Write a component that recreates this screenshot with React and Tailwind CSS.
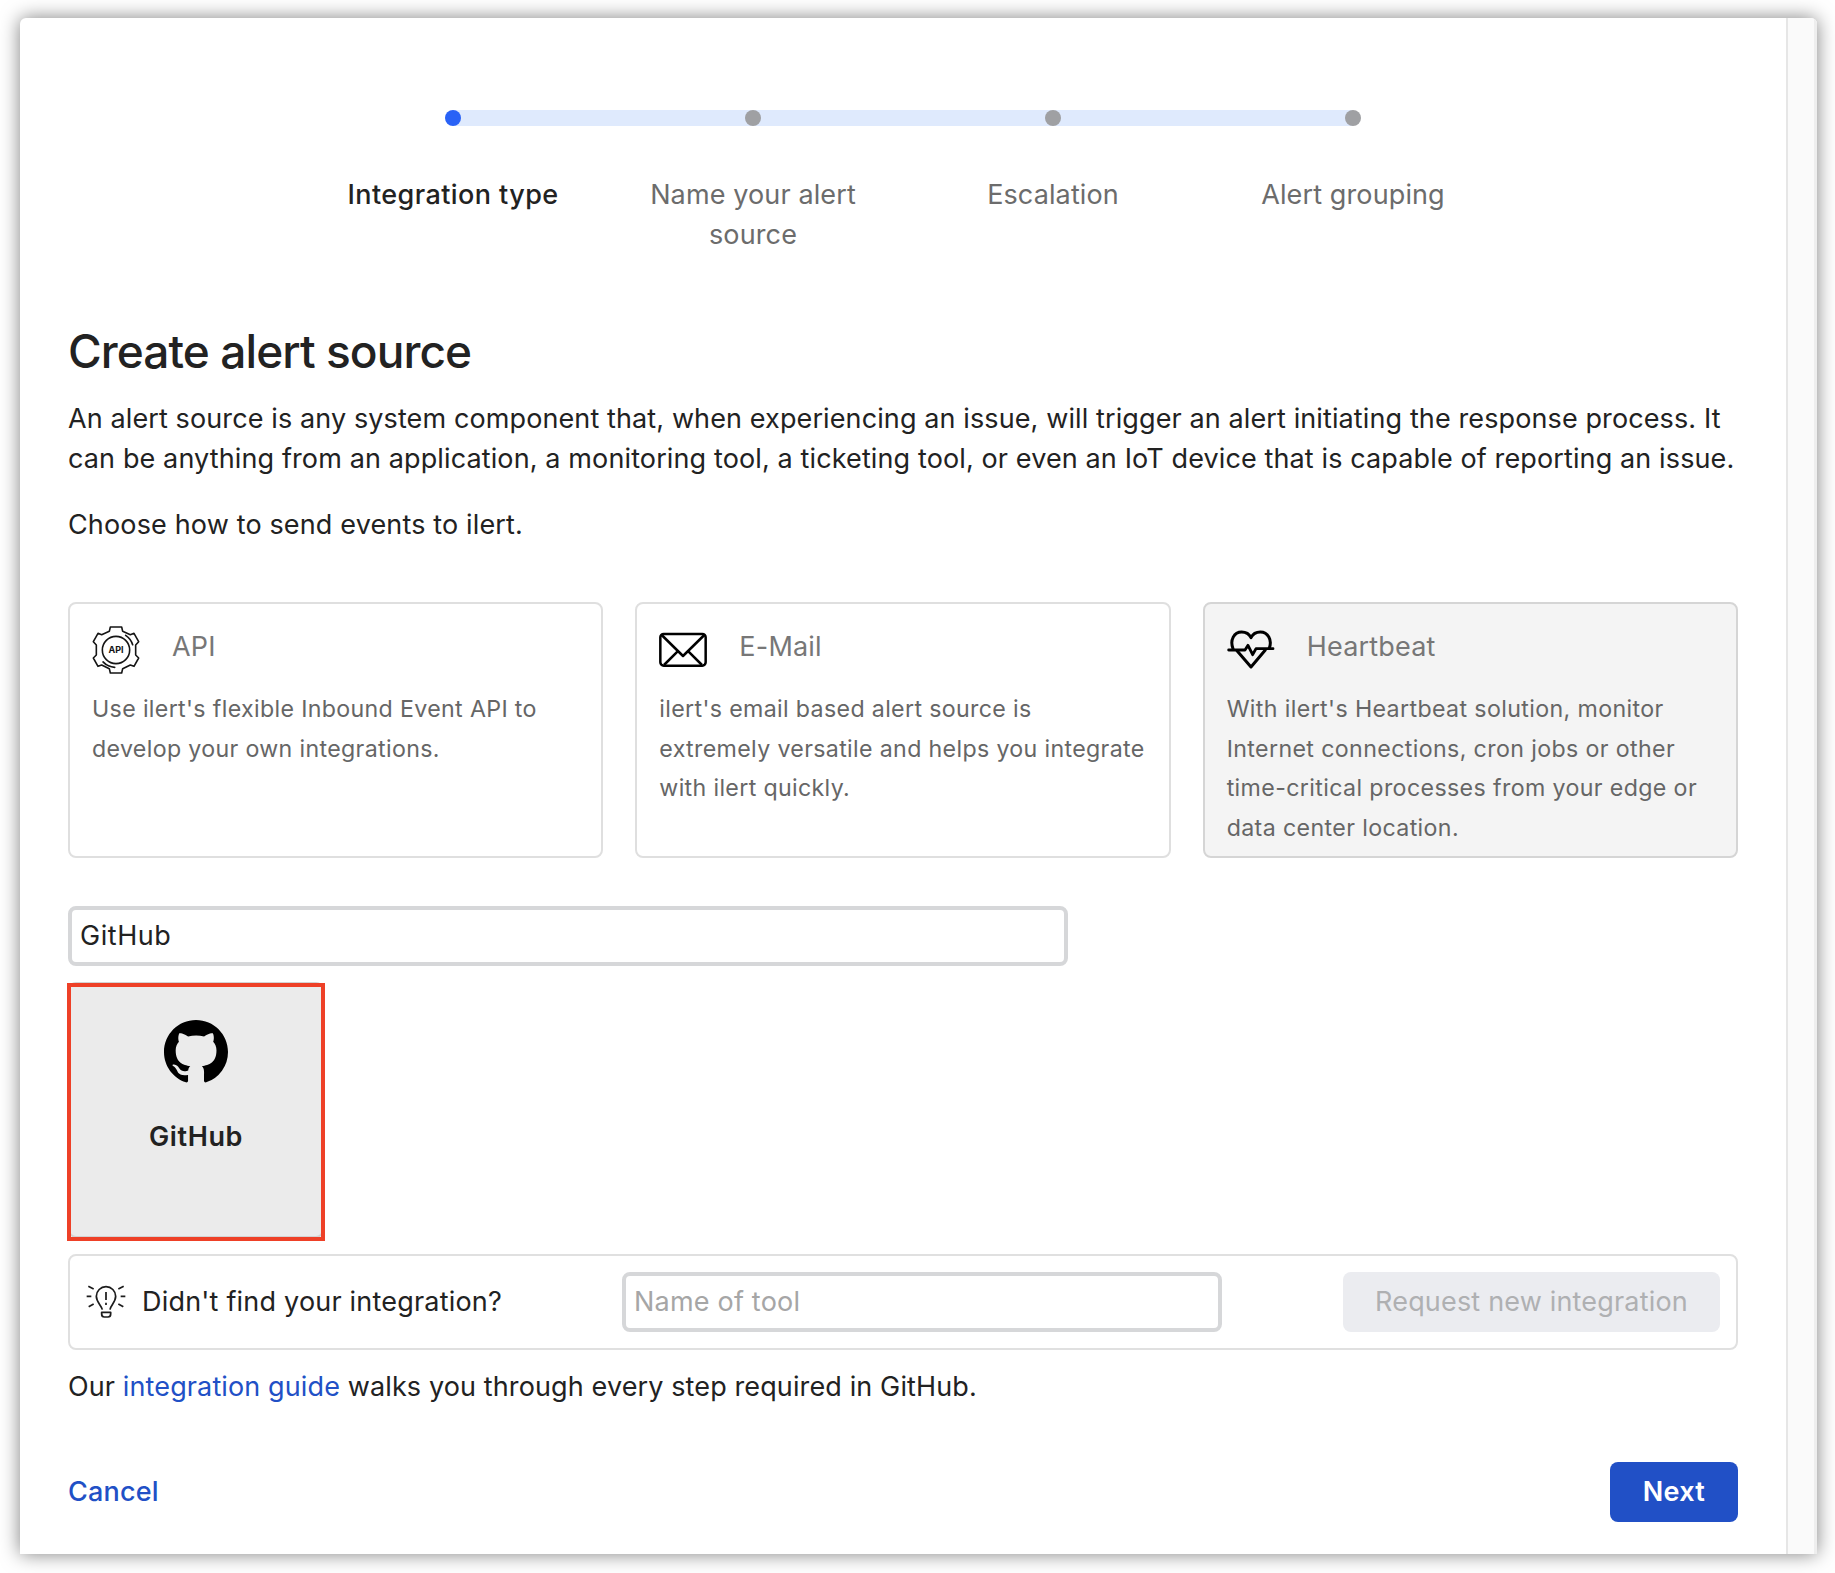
import React from "react";

const steps = [
  { label: "Integration type", active: true },
  { label: "Name your alert source" },
  { label: "Escalation" },
  { label: "Alert grouping" },
];

function ApiIcon() {
  return (
    <svg viewBox="0 0 144 144" className="size-12" fill="none" stroke="#151515" strokeWidth="4.8" strokeLinecap="round" strokeLinejoin="round">
      <path d="M55 3H89L92 16L115 26L126 22L140 47L131 57V87L140 96L126 121L115 117L92 128L89 141H55L52 128L29 117L18 121L4 96L13 87V57L4 47L18 22L29 26L52 16Z" />
      <circle cx="72" cy="72" r="41" />
      <path d="M101 28A53 53 0 0 1 122 56M43 116A53 53 0 0 1 33 108M68 124A53 53 0 0 1 34 108" strokeWidth="5" />
      <text x="72" y="81.5" textAnchor="middle" fontFamily="Inter, sans-serif" fontWeight="700" fontSize="27" fill="#151515" stroke="none">API</text>
    </svg>
  );
}

function MailIcon() {
  return (
    <svg viewBox="0 0 144 144" className="size-12" fill="none" stroke="#000" strokeWidth="7.5" strokeLinejoin="round">
      <rect x="4" y="24" width="136" height="95" rx="10" />
      <path d="M8 27L72 90L136 27M15 117L56 76M129 117L88 76" />
    </svg>
  );
}

function HeartbeatIcon() {
  return (
    <svg viewBox="0 0 144 144" className="size-12" fill="none" stroke="#000" strokeWidth="9" strokeLinecap="round" strokeLinejoin="round">
      <path d="M18 68C8 42 21 18 44 18C57 18 67 25 72 35C77 25 87 18 100 18C123 18 136 42 127 66" />
      <path d="M30 74L72 123L115 72" />
      <path d="M5 72H54L63 58L77 86L87 68H138" strokeWidth="8.5" />
    </svg>
  );
}

function BulbIcon() {
  return (
    <svg viewBox="0 0 120 120" className="size-10 shrink-0" fill="none" stroke="#1c1c1c" strokeWidth="5.2" strokeLinejoin="round">
      <path d="M49 83C46 69 31 61 31 43A29 29 0 0 1 89 43C89 61 74 69 72 83" />
      <path d="M60 30V54M60 62V69" />
      <path d="M47 91H74V96Q74 105 66 105H55Q47 105 47 96Z" />
      <path d="M2 43H16M104 43H118M7 13L23 21M113 13L97 21M8 74L23 66M112 74L97 66" />
    </svg>
  );
}

function GitHubMark() {
  return (
    <svg viewBox="0 0 16 16" className="size-16" fill="#000">
      <path d="M8 0C3.58 0 0 3.58 0 8c0 3.54 2.29 6.53 5.47 7.59.4.07.55-.17.55-.38 0-.19-.01-.82-.01-1.49-2.01.37-2.53-.49-2.69-.94-.09-.23-.48-.94-.82-1.13-.28-.15-.68-.52-.01-.53.63-.01 1.08.58 1.23.82.72 1.21 1.87.87 2.33.66.07-.52.28-.87.51-1.07-1.78-.2-3.64-.89-3.64-3.95 0-.87.31-1.59.82-2.15-.08-.2-.36-1.02.08-2.12 0 0 .67-.21 2.2.82.64-.18 1.32-.27 2-.27s1.36.09 2 .27c1.53-1.04 2.2-.82 2.2-.82.44 1.1.16 1.92.08 2.12.51.56.82 1.27.82 2.15 0 3.07-1.87 3.75-3.65 3.95.29.25.54.73.54 1.48 0 1.07-.01 1.93-.01 2.2 0 .21.15.46.55.38A8.01 8.01 0 0 0 16 8c0-4.42-3.58-8-8-8Z" />
    </svg>
  );
}

const options = [
  { title: "API", Icon: ApiIcon, lines: ["Use ilert's flexible Inbound Event API to", "develop your own integrations."] },
  { title: "E-Mail", Icon: MailIcon, lines: ["ilert's email based alert source is", "extremely versatile and helps you integrate", "with ilert quickly."] },
  {
    title: "Heartbeat",
    Icon: HeartbeatIcon,
    highlighted: true,
    lines: ["With ilert's Heartbeat solution, monitor", "Internet connections, cron jobs or other", "time-critical processes from your edge or", "data center location."],
  },
];

function Stepper() {
  return (
    <div className="mx-auto w-[1200px]">
      <div className="mx-[150px] h-4 bg-[#dfeafd]">
        <div className="-mx-2 flex justify-between">
          {steps.map((s) => (
            <span key={s.label} className={s.active ? "size-4 rounded-full bg-[#2962f6]" : "size-4 rounded-full bg-[#9fa0a3]"} />
          ))}
        </div>
      </div>
      <div className="mt-[49px] grid grid-cols-4 text-center leading-10">
        {steps.map((s) => (
          <div key={s.label} className={s.active ? "px-9 font-medium tracking-[0.42px]" : "px-9 tracking-[0.12px] text-[#6c6c6c]"}>
            {s.label}
          </div>
        ))}
      </div>
    </div>
  );
}

export default function App() {
  return (
    <div className="h-[1573px] w-[1835px] overflow-hidden bg-white pt-[18px] pl-[20px] font-['Inter',sans-serif] text-[27px] text-[#222]">
      <div className="flex h-[1536px] w-[1797px] overflow-hidden rounded-t-[6px] bg-white shadow-[0_0_19px_rgba(0,0,0,0.5)]">
        <main className="w-[1766px] pr-12 pl-12">
          <div className="-mr-[1px] -ml-[1px] pt-[92px]">
            <Stepper />
          </div>
          <h1 className="mt-[68px] text-[46px] leading-[56px] font-medium tracking-[-0.92px]">Create alert source</h1>
          <div className="mt-[20px] leading-10 tracking-[0.11px] whitespace-nowrap">
            <p>An alert source is any system component that, when experiencing an issue, will trigger an alert initiating the response process. It</p>
            <p className="tracking-[0.12px]">can be anything from an application, a monitoring tool, a ticketing tool, or even an IoT device that is capable of reporting an issue.</p>
            <p className="mt-[26px] tracking-[0.15px]">Choose how to send events to ilert.</p>
          </div>

          <div className="mt-[57px] grid grid-cols-3 gap-8">
            {options.map(({ title, Icon, lines, highlighted }) => (
              <section
                key={title}
                className={
                  highlighted
                    ? "h-64 rounded-lg border-2 border-[#d5d5d5] bg-[#f4f4f4] px-[22px] pt-[22px]"
                    : "h-64 rounded-lg border-2 border-[#dfdfdf] px-[22px] pt-[22px]"
                }
              >
                <div className="flex h-12 gap-8">
                  <Icon />
                  <h2 className="pt-[1px] leading-10 tracking-[0.2px] text-[#777]">{title}</h2>
                </div>
                <div
                  className={
                    highlighted
                      ? "mt-[16px] text-[23.2px] leading-[39.6px] tracking-[0.37px] whitespace-nowrap text-[#666]"
                      : "mt-[16px] text-[23.2px] leading-[39.6px] tracking-[0.34px] whitespace-nowrap text-[#666]"
                  }
                >
                  {lines.map((l) => (
                    <p key={l}>{l}</p>
                  ))}
                </div>
              </section>
            ))}
          </div>

          <div className="mt-12 flex h-[60px] w-[1000px] items-center rounded-lg border-4 border-[#d6d7d9] pt-[1px] pl-[8px] tracking-[0.55px]">GitHub</div>

          <div className="relative mt-4 flex size-64 flex-col items-center rounded-lg border-2 border-[#d3d3d3] bg-[#ebebeb] pt-[36px]">
            <GitHubMark />
            <div className="mt-[33px] leading-10 font-semibold tracking-[0.6px]">GitHub</div>
            <div className="absolute -top-[1px] -left-[3px] size-[258px] border-4 border-[#ee4027]" />
          </div>

          <div className="mt-4 flex h-24 items-center rounded-lg border-2 border-[#e0e0e0] pr-4 pl-4">
            <BulbIcon />
            <span className="ml-4 w-[480px] pt-[1px] tracking-[0.2px]">Didn't find your integration?</span>
            <div className="flex h-[60px] w-[600px] items-center rounded-lg border-4 border-[#d6d7d9] pt-[1px] pl-[8px] tracking-[0.2px] text-[#a6a6a6]">Name of tool</div>
            <div className="ml-auto flex h-[60px] w-[377px] items-center justify-center rounded-lg bg-[#ebecf0] pt-[1px] tracking-[0.18px] text-[#afb0b2]">Request new integration</div>
          </div>

          <p className="mt-[17px] leading-10 tracking-[0.12px]">
            Our <a className="text-[#2150c6]">integration guide</a> walks you through every step required in GitHub.
          </p>

          <div className="mt-[55px] flex items-center justify-between font-medium">
            <button className="pt-[1px] tracking-[0.2px] text-[#2150c6]">Cancel</button>
            <button className="h-[60px] w-32 rounded-lg bg-[#2150c6] pt-[1px] font-semibold tracking-[0.3px] text-white">Next</button>
          </div>
        </main>
        <div className="w-[31px] border-r-[3px] border-l-2 border-r-[#eee] border-l-[#e6e6e6] bg-[#fafafa]" />
      </div>
    </div>
  );
}
